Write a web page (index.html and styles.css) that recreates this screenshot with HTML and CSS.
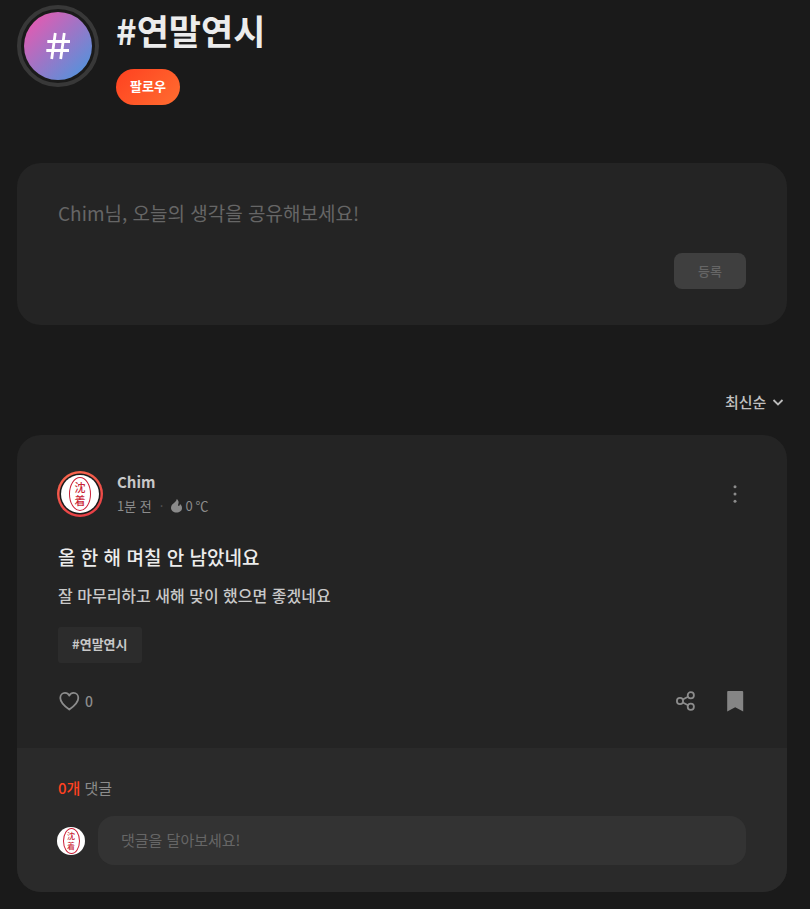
FILE: index.html
```
<!DOCTYPE html>
<html lang="ko">
<head>
  <meta charset="utf-8">
  <meta name="viewport" content="width=device-width, initial-scale=1">
  <title>#연말연시</title>
  <link rel="stylesheet" href="styles.css">
</head>
<body>
  <main class="page">
    <header class="topic">
      <div class="topic-icon">
        <svg width="68" height="68" viewBox="0 0 68 68" fill="none" stroke="#fff" stroke-width="2.8" aria-hidden="true">
          <path d="M31.3 21 27.7 47M40.3 21 36.7 47M23.3 29.500H46M22.3 38.500H45"/>
        </svg>
      </div>
      <div class="topic-info">
        <h1>#연말연시</h1>
        <button type="button" class="follow">팔로우</button>
      </div>
    </header>

    <form class="composer">
      <textarea rows="1" aria-label="글쓰기" placeholder="Chim님, 오늘의 생각을 공유해보세요!"></textarea>
      <button type="submit" class="submit" disabled>등록</button>
    </form>

    <div class="sort">
      <select aria-label="정렬">
        <option>최신순</option>
        <option>인기순</option>
      </select>
      <svg width="12" height="8" viewBox="0 0 12 8" fill="none" stroke="#bbb" stroke-width="1.8" aria-hidden="true">
        <path d="M1.5 2 6 6.500 10.500 2"/>
      </svg>
    </div>

    <article class="post">
      <div class="post-main">
        <div class="author">
          <span class="avatar">
            <span class="seal"><span class="seal-mark"><span>沈</span><span>着</span></span></span>
          </span>
          <div class="author-info">
            <a href="#" class="name">Chim</a>
            <div class="meta">
              <span>1분 전</span>
              <span class="dot">·</span>
              <span class="temp">
                <svg width="11" height="14" viewBox="0 0 11 14" fill="#8a8a8a" aria-hidden="true">
                  <path d="M5.800 0C7.600 1.600 8 3 7.300 5 6.900 6.200 7.100 6.900 7.800 6.900 8.600 6.900 8.900 6.100 8.900 5.100 10.300 6.200 11 7.500 11 9 11 11.800 8.600 13.500 5.500 13.500S0 11.600 0 8.900C0 7.400.5 6.200 1.500 5.200 3 3.800 5.400 2.500 5.800 0Z"/>
                </svg>
                0 ℃
              </span>
            </div>
          </div>
          <button type="button" class="icon-button" aria-label="더보기">
            <svg width="24" height="24" viewBox="0 0 24 24" fill="#8c8c8c">
              <circle cx="13" cy="4.800" r="1.500"/>
              <circle cx="13" cy="12" r="1.500"/>
              <circle cx="13" cy="19.200" r="1.500"/>
            </svg>
          </button>
        </div>

        <h2>올 한 해 며칠 안 남았네요</h2>
        <p>잘 마무리하고 새해 맞이 했으면 좋겠네요</p>
        <a href="#" class="tag">#연말연시</a>

        <div class="actions">
          <button type="button" class="icon-button like">
            <svg width="23" height="24" viewBox="0 0 23 24" fill="none" stroke="#8c8c8c" stroke-width="1.800" stroke-linejoin="round" aria-hidden="true">
              <path d="M11.300 20.500C8 18.200 2.300 13.800 2.300 9 2.300 6 4.400 3.900 7 3.900 8.800 3.900 10.400 4.900 11.300 6.600 12.200 4.900 13.800 3.900 15.600 3.900 18.200 3.900 20.300 6 20.300 9 20.300 13.800 14.600 18.200 11.300 20.500Z"/>
            </svg>
            0
          </button>
          <button type="button" class="icon-button share" aria-label="공유">
            <svg width="24" height="24" viewBox="0 0 24 24" fill="none" stroke="#8c8c8c" stroke-width="1.800">
              <circle cx="8" cy="12" r="3.100"/>
              <circle cx="18.800" cy="6.300" r="3.100"/>
              <circle cx="18.800" cy="17.700" r="3.100"/>
              <path d="M10.800 10.500 16 7.800M10.800 13.500 16 16.200"/>
            </svg>
          </button>
          <button type="button" class="icon-button" aria-label="북마크">
            <svg width="24" height="24" viewBox="0 0 24 24" fill="#858585">
              <path d="M6 2H20.200a1 1 0 0 1 1 1V22.500L13.200 18.300 5.200 22.500V3A1 1 0 0 1 6 2Z"/>
            </svg>
          </button>
        </div>
      </div>

      <section class="comments">
        <div class="count"><strong>0개</strong> 댓글</div>
        <div class="comment-form">
          <span class="seal seal-small"><span class="seal-mark"><span>沈</span><span>着</span></span></span>
          <input type="text" aria-label="댓글" placeholder="댓글을 달아보세요!">
        </div>
      </section>
    </article>
  </main>
</body>
</html>
```
FILE: styles.css
```
* {
  box-sizing: border-box;
}

body {
  margin: 0;
  background: #1a1a1a;
  color: #c8c8c8;
  font-family: "Noto Sans CJK KR", "Noto Sans", sans-serif;
  font-size: 14px;
}

button,
input,
select,
textarea {
  font-family: inherit;
  border: 0;
  outline: none;
}

button {
  cursor: pointer;
  padding: 0;
}

a {
  color: inherit;
  text-decoration: none;
}

svg {
  display: block;
  flex: none;
}

.page {
  padding: 5px 23px 17px 17px;
}

/* topic header */
.topic {
  display: flex;
  gap: 17px;
}

.topic-icon {
  flex: none;
  width: 82px;
  height: 82px;
  padding: 3px;
  border: 4px solid #383838;
  border-radius: 50%;
}

.topic-icon svg {
  border-radius: 50%;
  background: linear-gradient(135deg, #f653ac, #4299e1);
}

.topic-info h1 {
  margin: 0 0 14px;
  font-size: 35px;
  line-height: 50px;
  font-weight: 700;
  color: #ececec;
}

.follow {
  display: block;
  width: 64px;
  height: 36px;
  padding-bottom: 3px;
  border-radius: 18px;
  background: linear-gradient(135deg, #ff4120, #ff6d30);
  color: #fff;
  font-size: 13px;
  font-weight: 700;
}

/* composer */
.composer {
  margin-top: 58px;
  padding: 32px 41px 36px;
  border-radius: 24px;
  background: #242424;
}

.composer textarea {
  display: block;
  width: 100%;
  height: 36px;
  margin-bottom: 22px;
  padding: 0;
  background: none;
  color: #ececec;
  font-size: 19px;
  line-height: 36px;
  resize: none;
  overflow: hidden;
}

::placeholder {
  color: #666;
  opacity: 1;
}

.submit {
  display: block;
  width: 72px;
  height: 36px;
  margin-left: auto;
  padding-bottom: 2px;
  border-radius: 8px;
  background: #3f3f3f;
  color: #666;
  font-size: 13px;
  font-weight: 500;
}

/* sort */
.sort {
  display: flex;
  align-items: center;
  justify-content: flex-end;
  gap: 5px;
  margin: 65px 3px 21px 0;
}

.sort select {
  appearance: none;
  padding: 0;
  background: none;
  color: #c0c0c0;
  font-size: 15px;
  font-weight: 500;
  line-height: 24px;
}

/* post */
.post {
  border-radius: 24px;
  background: #242424;
  overflow: hidden;
}

.post-main {
  padding: 35px 41px 35px 40px;
}

.author {
  display: flex;
  align-items: center;
  gap: 14px;
}

.avatar {
  flex: none;
  width: 46px;
  height: 46px;
  padding: 4px;
  border-radius: 50%;
  background: radial-gradient(circle, #1c1c1c 20px, transparent 21px), linear-gradient(160deg, #fb6a4e, #e63a45);
}

/* round profile picture with the red oval seal */
.seal {
  display: flex;
  flex: none;
  align-items: center;
  justify-content: center;
  width: 38px;
  height: 38px;
  border-radius: 50%;
  background: #fff;
}

.seal-mark {
  display: flex;
  flex-direction: column;
  align-items: center;
  justify-content: center;
  width: 22px;
  height: 34px;
  border: 1px solid #ca1f37;
  border-radius: 50%;
  color: #ca1f37;
  font-size: 11px;
  line-height: 13px;
  font-weight: 500;
}

.seal-small {
  width: 28px;
  height: 28px;
}

.seal-small .seal-mark {
  width: 17px;
  height: 26px;
  font-size: 8px;
  line-height: 10px;
}

.author-info {
  flex: 1;
}

.name {
  display: block;
  font-size: 15px;
  line-height: 24px;
  font-weight: 700;
}

.meta {
  display: flex;
  gap: 8px;
  font-size: 13px;
  line-height: 24px;
  color: #8c8c8c;
}

.dot {
  color: #555;
}

.temp {
  display: flex;
  align-items: center;
  gap: 3px;
}

.icon-button {
  display: flex;
  align-items: center;
  background: none;
  color: #8c8c8c;
}

.post h2 {
  margin: 24px 0 11px;
  font-size: 19px;
  line-height: 30px;
  font-weight: 500;
  color: #ececec;
}

.post h2,
.post p,
.tag,
.like,
.count {
  margin-left: 1px;
}

.post p {
  margin-top: 0;
  margin-bottom: 20px;
  font-size: 16px;
  line-height: 24px;
  font-weight: 500;
}

.tag {
  display: inline-block;
  padding: 0 14px 2px;
  border-radius: 3px;
  background: #2c2c2c;
  font-size: 13px;
  font-weight: 700;
  line-height: 34px;
  vertical-align: top;
}

.actions {
  display: flex;
  align-items: center;
  gap: 26px;
  margin-top: 26px;
}

.like {
  gap: 4px;
  font-size: 14px;
  font-weight: 500;
}

.share {
  margin-left: auto;
}

/* comments */
.comments {
  padding: 28px 41px 27px 40px;
  background: #2a2a2a;
}

.count {
  margin-bottom: 16px;
  font-size: 15px;
  line-height: 24px;
  color: #8c8c8c;
}

.count strong {
  color: #ff4120;
  font-weight: 500;
}

.comment-form {
  display: flex;
  align-items: center;
  gap: 13px;
}

.comment-form input {
  flex: 1;
  min-width: 0;
  height: 49px;
  padding: 0 23px 2px;
  border-radius: 16px;
  background: #333;
  color: #ececec;
  font-size: 15px;
}
```
